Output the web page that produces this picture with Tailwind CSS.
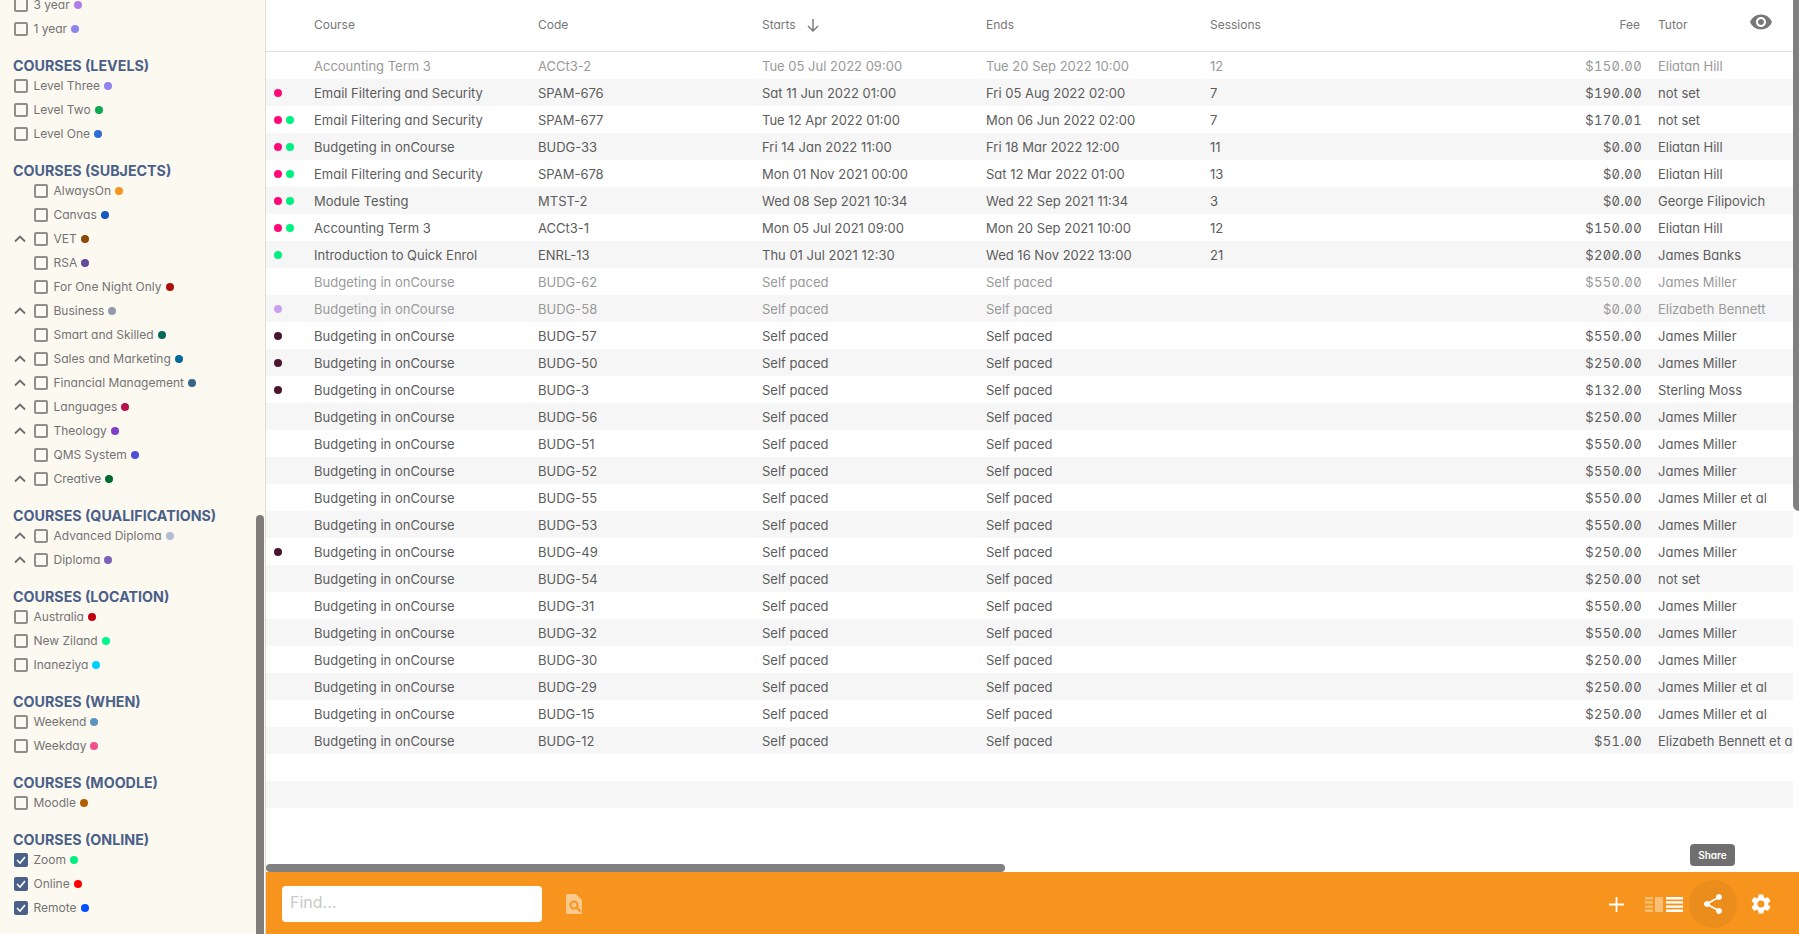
<!DOCTYPE html>
<html lang="en">
<head>
    <meta charset="UTF-8">
    <title>Courses</title>
    <script src="https://cdn.jsdelivr.net/npm/@tailwindcss/browser@4"></script>
</head>
<body class="bg-white">
    <div class="flex h-[934px] w-[1799px] overflow-hidden font-['Inter',sans-serif] [font-feature-settings:'cv11']">
        <!-- Sidebar -->
        <aside class="relative w-[266px] shrink-0 h-full overflow-hidden bg-[#fcf9f1] border-r border-[#dfdcd4]">
            <div id="filters" class="-mt-[7px]"></div>
            <div class="absolute right-[1px] top-[515px] bottom-0 w-2 rounded-t-md bg-[#7f7e7a]"></div>
        </aside>

        <!-- Main -->
        <main class="relative flex-1 min-w-0 h-full flex flex-col overflow-hidden">
            <div class="flex-1 min-h-0 overflow-hidden">
                <div class="grid grid-cols-[48px_224px_224px_224px_224px_224px_208px_16px_135px] h-[52px] pb-[1px] items-center border-b border-[#e0e0e0] text-[12px] text-[#777]">
                    <div></div>
                    <div>Course</div>
                    <div>Code</div>
                    <div class="flex items-center gap-2.5">Starts
                        <svg class="w-3.5 h-3.5" viewBox="0 0 14 14" fill="none" stroke="#777" stroke-width="1.4"><path d="M7 1v12M2 8l5 5 5-5"/></svg>
                    </div>
                    <div>Ends</div>
                    <div>Sessions</div>
                    <div class="text-right pr-[2px]">Fee</div>
                    <div></div>
                    <div>Tutor</div>
                </div>
                <div id="rows"></div>
            </div>
            <!-- Bottom bar -->
            <div class="h-[62px] shrink-0 flex items-center bg-[#f7941d] pl-4 pr-[26px] pt-[2px]">
                <div class="w-[260px] h-9 rounded bg-white flex items-center px-2 pb-1 text-[16px] text-[#c8c8c8]">Find...</div>
                <svg class="ml-6 w-4 h-5" viewBox="0 0 16 20"><path d="M1.500 0H10l6 6v12.500a1.500 1.500 0 0 1-1.500 1.500h-13A1.500 1.500 0 0 1 0 18.500v-17A1.500 1.500 0 0 1 1.500 0z" fill="#fcc88c"/><circle cx="8" cy="11" r="3.500" fill="none" stroke="#f7941d" stroke-width="2"/><path d="M10.500 13.500l4 4" stroke="#f7941d" stroke-width="2"/></svg>
                <div class="ml-auto flex items-center">
                    <svg class="w-[15px] h-[15px]" viewBox="0 0 15 15" stroke="#fff" stroke-width="1.800"><path d="M7.500 0v15M0 7.500h15"/></svg>
                    <div class="ml-[21px] flex items-center gap-[3px]">
                        <svg class="w-[18px] h-[15px]" viewBox="0 0 18 15" fill="#fff" fill-opacity=".4"><path d="M0 0h8v2.400H0zM0 4.200h8v2.400H0zM0 8.400h8v2.400H0zM0 12.600h8V15H0zM10 0h8v15h-8z"/></svg>
                        <svg class="w-[17px] h-[15px]" viewBox="0 0 17 15" fill="#fff"><path d="M0 0h17v2.400H0zM0 4.200h17v2.400H0zM0 8.400h17v2.400H0zM0 12.600h17V15H0z"/></svg>
                    </div>
                    <div class="ml-1.5 w-12 h-12 rounded-full bg-[#eb8d1c] flex items-center justify-center">
                        <svg class="w-6 h-6" viewBox="0 0 24 24" fill="#fff"><path d="M18 16.080c-.76 0-1.440.3-1.960.77L8.910 12.700c.05-.23.09-.46.09-.7s-.04-.47-.09-.7l7.050-4.110c.54.5 1.250.81 2.040.81 1.660 0 3-1.340 3-3s-1.340-3-3-3-3 1.340-3 3c0 .24.04.47.09.7L8.040 9.810C7.500 9.310 6.790 9 6 9c-1.660 0-3 1.340-3 3s1.340 3 3 3c.79 0 1.500-.31 2.040-.81l7.120 4.160c-.05.21-.08.43-.08.65 0 1.610 1.310 2.920 2.920 2.920s2.920-1.310 2.920-2.920-1.310-2.920-2.920-2.920z"/></svg>
                    </div>
                    <svg class="ml-[12px] w-6 h-6" viewBox="0 0 24 24" fill="#fff"><path d="M19.140 12.940c.04-.3.060-.61.060-.94 0-.32-.02-.64-.07-.94l2.030-1.580a.49.49 0 0 0 .12-.61l-1.920-3.320a.49.49 0 0 0-.59-.22l-2.390.96c-.5-.38-1.030-.7-1.620-.94l-.36-2.540a.48.48 0 0 0-.48-.41h-3.840a.48.48 0 0 0-.47.41l-.36 2.540c-.59.24-1.130.57-1.620.94l-2.390-.96a.48.48 0 0 0-.59.22L2.740 8.870a.48.48 0 0 0 .12.61l2.030 1.580c-.05.3-.09.63-.09.94s.02.64.07.94l-2.030 1.580a.49.49 0 0 0-.12.61l1.920 3.320c.12.22.37.29.59.22l2.390-.96c.5.38 1.030.7 1.620.94l.36 2.540c.05.24.24.41.48.41h3.840c.24 0 .44-.17.47-.41l.36-2.540c.59-.24 1.130-.56 1.620-.94l2.390.96c.22.08.47 0 .59-.22l1.920-3.320a.48.48 0 0 0-.12-.61l-2.010-1.580zM12 15.600c-1.980 0-3.600-1.620-3.600-3.600s1.620-3.600 3.600-3.600 3.600 1.620 3.600 3.600-1.620 3.600-3.600 3.600z"/></svg>
                </div>
            </div>
            <!-- Overlays -->
            <div class="absolute left-0 top-[864px] w-[739px] h-2 rounded-full bg-[#808080]"></div>
            <div class="absolute right-0 top-0 h-[511px] w-1.5 rounded-bl-md bg-[#808080]"></div>
            <div class="absolute right-[26px] top-[10px]">
                <svg class="w-6 h-6 block" viewBox="0 0 24 24" fill="#777"><path d="M12 4.500C7 4.500 2.730 7.610 1 12c1.730 4.390 6 7.500 11 7.500s9.270-3.110 11-7.500c-1.730-4.390-6-7.500-11-7.500zM12 17c-2.760 0-5-2.240-5-5s2.240-5 5-5 5 2.240 5 5-2.240 5-5 5zm0-8c-1.660 0-3 1.340-3 3s1.340 3 3 3 3-1.340 3-3-1.340-3-3-3z"/></svg>
            </div>
            <div class="absolute left-[1424px] top-[844px] w-[45px] h-[22px] rounded bg-[#6f6f6f] flex items-center justify-center text-[10px] font-semibold text-white">Share</div>
        </main>
    </div>

    <script>
        const P = '#ff0a78', G = '#00f07f', L = '#c9a0f0', D = '#4a1530';
        const selfPaced = ['Self paced', 'Self paced', ''];
        // dots, course, code, starts, ends, sessions, fee, tutor, muted
        const rows = [
            [[], 'Accounting Term 3', 'ACCt3-2', 'Tue 05 Jul 2022 09:00', 'Tue 20 Sep 2022 10:00', '12', '$150.00', 'Eliatan Hill', 1],
            [[P], 'Email Filtering and Security', 'SPAM-676', 'Sat 11 Jun 2022 01:00', 'Fri 05 Aug 2022 02:00', '7', '$190.00', 'not set'],
            [[P, G], 'Email Filtering and Security', 'SPAM-677', 'Tue 12 Apr 2022 01:00', 'Mon 06 Jun 2022 02:00', '7', '$170.01', 'not set'],
            [[P, G], 'Budgeting in onCourse', 'BUDG-33', 'Fri 14 Jan 2022 11:00', 'Fri 18 Mar 2022 12:00', '11', '$0.00', 'Eliatan Hill'],
            [[P, G], 'Email Filtering and Security', 'SPAM-678', 'Mon 01 Nov 2021 00:00', 'Sat 12 Mar 2022 01:00', '13', '$0.00', 'Eliatan Hill'],
            [[P, G], 'Module Testing', 'MTST-2', 'Wed 08 Sep 2021 10:34', 'Wed 22 Sep 2021 11:34', '3', '$0.00', 'George Filipovich'],
            [[P, G], 'Accounting Term 3', 'ACCt3-1', 'Mon 05 Jul 2021 09:00', 'Mon 20 Sep 2021 10:00', '12', '$150.00', 'Eliatan Hill'],
            [[G], 'Introduction to Quick Enrol', 'ENRL-13', 'Thu 01 Jul 2021 12:30', 'Wed 16 Nov 2022 13:00', '21', '$200.00', 'James Banks'],
            [[], 'Budgeting in onCourse', 'BUDG-62', ...selfPaced, '$550.00', 'James Miller', 1],
            [[L], 'Budgeting in onCourse', 'BUDG-58', ...selfPaced, '$0.00', 'Elizabeth Bennett', 1],
            [[D], 'Budgeting in onCourse', 'BUDG-57', ...selfPaced, '$550.00', 'James Miller'],
            [[D], 'Budgeting in onCourse', 'BUDG-50', ...selfPaced, '$250.00', 'James Miller'],
            [[D], 'Budgeting in onCourse', 'BUDG-3', ...selfPaced, '$132.00', 'Sterling Moss'],
            [[], 'Budgeting in onCourse', 'BUDG-56', ...selfPaced, '$250.00', 'James Miller'],
            [[], 'Budgeting in onCourse', 'BUDG-51', ...selfPaced, '$550.00', 'James Miller'],
            [[], 'Budgeting in onCourse', 'BUDG-52', ...selfPaced, '$550.00', 'James Miller'],
            [[], 'Budgeting in onCourse', 'BUDG-55', ...selfPaced, '$550.00', 'James Miller et al'],
            [[], 'Budgeting in onCourse', 'BUDG-53', ...selfPaced, '$550.00', 'James Miller'],
            [[D], 'Budgeting in onCourse', 'BUDG-49', ...selfPaced, '$250.00', 'James Miller'],
            [[], 'Budgeting in onCourse', 'BUDG-54', ...selfPaced, '$250.00', 'not set'],
            [[], 'Budgeting in onCourse', 'BUDG-31', ...selfPaced, '$550.00', 'James Miller'],
            [[], 'Budgeting in onCourse', 'BUDG-32', ...selfPaced, '$550.00', 'James Miller'],
            [[], 'Budgeting in onCourse', 'BUDG-30', ...selfPaced, '$250.00', 'James Miller'],
            [[], 'Budgeting in onCourse', 'BUDG-29', ...selfPaced, '$250.00', 'James Miller et al'],
            [[], 'Budgeting in onCourse', 'BUDG-15', ...selfPaced, '$250.00', 'James Miller et al'],
            [[], 'Budgeting in onCourse', 'BUDG-12', ...selfPaced, '$51.00', 'Elizabeth Bennett et al'],
            [[], '', '', '', '', '', '', ''],
            [[], '', '', '', '', '', '', '']
        ];

        document.getElementById('rows').innerHTML = rows.map((r, i) => {
            const dots = r[0].map(c => `<span class="w-2 h-2 rounded-full" style="background:${c}"></span>`).join('');
            return `<div class="grid grid-cols-[48px_224px_224px_224px_224px_224px_208px_16px_135px] w-[1527px] h-[27px] pt-[2px] items-center text-[13px] whitespace-nowrap ${i % 2 ? 'bg-[#f6f6f6]' : 'bg-white'} ${r[8] ? 'text-[#999]' : 'text-[#5c5c5c]'}">
                <div class="flex gap-1 pl-[8px] -mt-[1px]">${dots}</div>
                <div>${r[1]}</div><div>${r[2]}</div><div>${r[3]}</div><div>${r[4]}</div><div>${r[5]}</div>
                <div class="text-right tracking-[0.4px]"><span class="[font-feature-settings:'tnum','zero']">${r[6]}</span></div><div></div><div class="overflow-hidden">${r[7]}</div>
            </div>`;
        }).join('');

        const groups = [
            ['', [['3 year', '#b07ee8'], ['1 year', '#8f84ee']]],
            ['COURSES (LEVELS)', [['Level Three', '#8f84ee'], ['Level Two', '#0aa84f'], ['Level One', '#2f6cd8']]],
            ['COURSES (SUBJECTS)', [['AlwaysOn', '#f7941d', 1], ['Canvas', '#1558c0', 1], ['VET', '#8a4b08', 2], ['RSA', '#5f4b9b', 1], ['For One Night Only', '#b00e0e', 1], ['Business', '#929ab0', 2], ['Smart and Skilled', '#00695c', 1], ['Sales and Marketing', '#006a9b', 2], ['Financial Management', '#38648c', 2], ['Languages', '#b5124f', 2], ['Theology', '#7e3fc8', 2], ['QMS System', '#4d4fd8', 1], ['Creative', '#006b30', 2]]],
            ['COURSES (QUALIFICATIONS)', [['Advanced Diploma', '#b4bcd4', 2], ['Diploma', '#7c62b8', 2]]],
            ['COURSES (LOCATION)', [['Australia', '#c00010'], ['New Ziland', '#00f58a'], ['Inaneziya', '#00cfff']]],
            ['COURSES (WHEN)', [['Weekend', '#5b94c0'], ['Weekday', '#f0508c']]],
            ['COURSES (MOODLE)', [['Moodle', '#b06000']]],
            ['COURSES (ONLINE)', [['Zoom', '#00f07f', 0, 1], ['Online', '#ff0000', 0, 1], ['Remote', '#0050ff', 0, 1]]]
        ];

        const chevron = `<svg class="w-3 h-3 mr-2" viewBox="0 0 12 12" fill="none" stroke="#6e6e6e" stroke-width="1.800"><path d="M1 8.500l5-5 5 5"/></svg>`;
        const tick = `<svg class="w-full h-full" viewBox="0 0 14 14" fill="none" stroke="#fff" stroke-width="1.600"><path d="M3 7l3 3 5-6"/></svg>`;

        document.getElementById('filters').innerHTML = groups.map(([title, items], g) => `
            <section class="${g ? 'mt-[17px]' : ''}">
                ${title ? `<h3 class="h-4 pl-[13px] flex items-center text-[14.250px] font-bold whitespace-nowrap text-[#4a6088]">${title}</h3>` : ''}
                ${items.map(([name, color, nest, on]) => `
                    <div class="h-6 pl-[14px] flex items-center text-[12px] text-[#737373]">
                        ${nest === 2 ? chevron : nest === 1 ? '<span class="w-5"></span>' : ''}
                        <span class="w-[14px] h-[14px] rounded-[2px] ${on ? 'bg-[#4a6088]' : 'border-2 border-[#908e88]'}">${on ? tick : ''}</span>
                        <span class="ml-[5.500px]">${name}</span>
                        <span class="ml-[4px] w-2 h-2 rounded-full" style="background:${color}"></span>
                    </div>`).join('')}
            </section>`).join('');
    </script>
</body>
</html>
